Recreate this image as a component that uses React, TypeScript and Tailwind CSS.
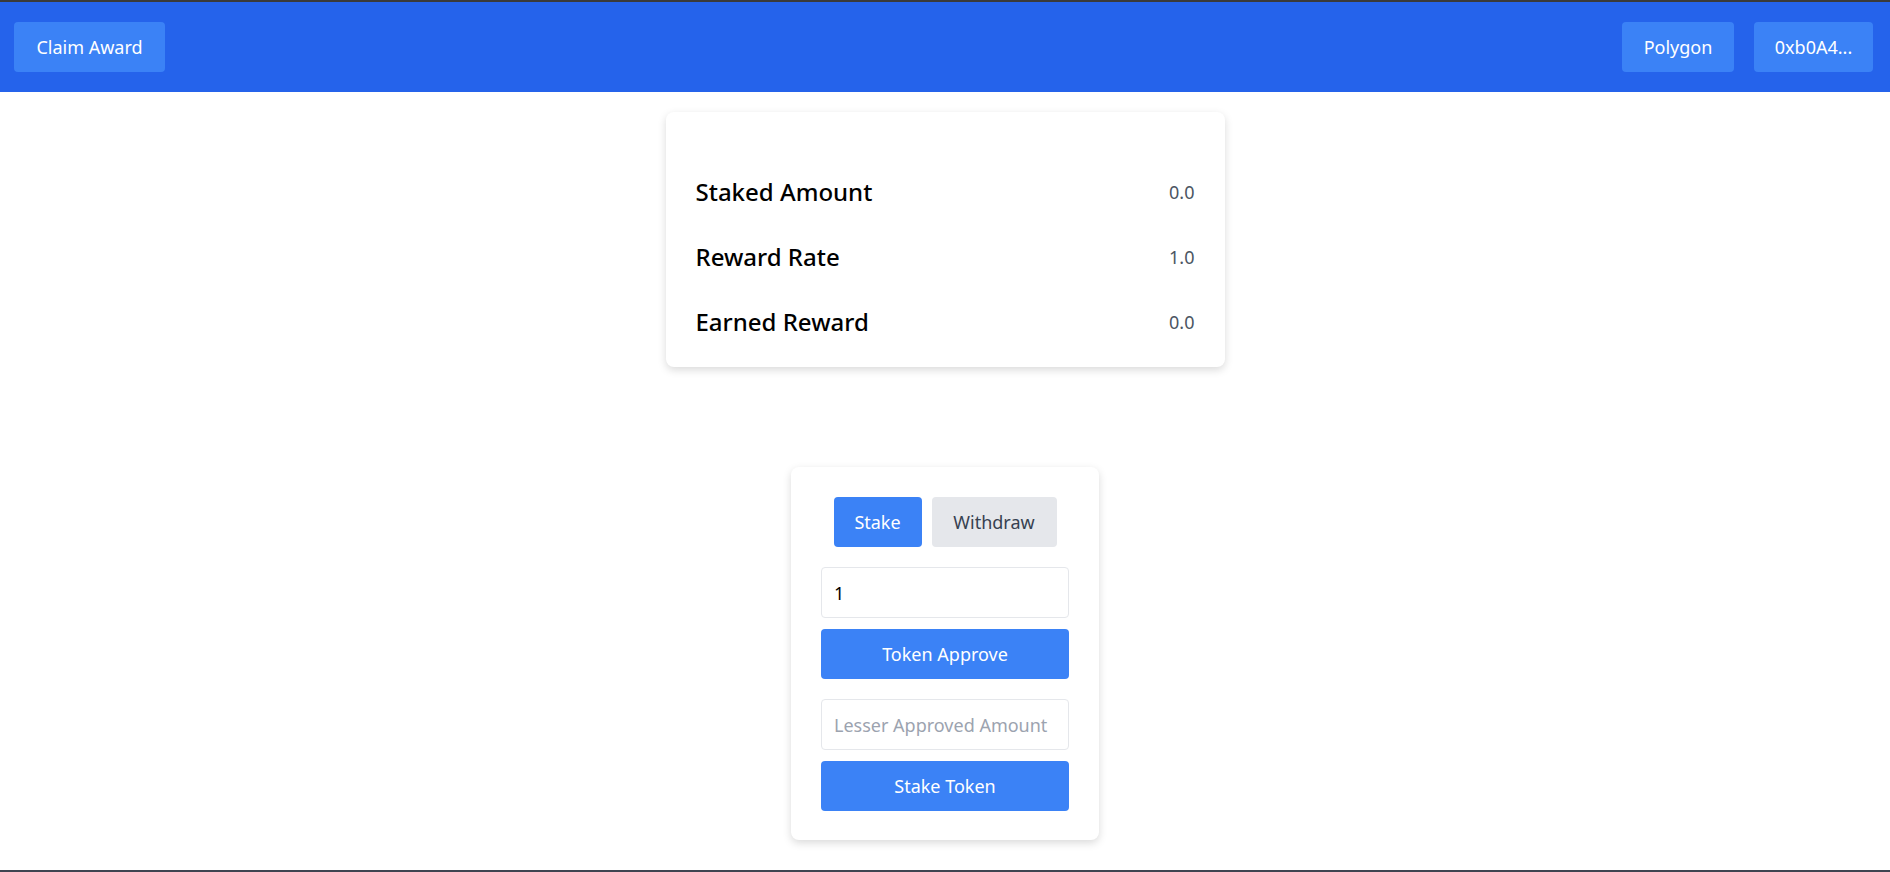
import { useState } from "react";

const rows = [
  { label: "Staked Amount", value: "0.0" },
  { label: "Reward Rate", value: "1.0" },
  { label: "Earned Reward", value: "0.0" },
];

export default function App() {
  const [tab, setTab] = useState<"stake" | "withdraw">("stake");
  const [amount, setAmount] = useState("1");
  const [lesser, setLesser] = useState("");

  return (
    <div
      className="flex min-h-[872px] flex-col border-t-2 border-b-2 border-t-[#3a3a3a] border-b-[#3f4451] bg-white"
      style={{ fontFamily: '"Segoe UI", "Noto Sans", sans-serif' }}
    >
      <header className="flex h-[90px] items-center justify-between bg-[#2563eb] pl-[14px] pr-[17px]">
        <button className="h-[50px] w-[151px] rounded text-lg text-white bg-[#3b82f6]">Claim Award</button>
        <div className="flex gap-5">
          <button className="h-[50px] w-[112px] rounded text-lg text-white bg-[#3b82f6]">Polygon</button>
          <button className="h-[50px] w-[119px] rounded text-lg text-white bg-[#3b82f6]">0xb0A4...</button>
        </div>
      </header>

      <main className="flex flex-col">
        <section className="mt-[20px] mx-auto w-[559px] rounded-lg bg-white px-[30px] pt-[47px] pb-[13px] shadow-[0_3px_8px_rgba(0,0,0,0.15)]">
          {rows.map((r) => (
            <div key={r.label} className="flex h-[65px] items-center justify-between">
              <span className="text-2xl font-medium text-black">{r.label}</span>
              <span className="text-lg text-[#4b5563]">{r.value}</span>
            </div>
          ))}
        </section>

        <section className="mt-[100px] mx-auto w-[308px] rounded-lg bg-white px-[30px] pt-[30px] pb-[29px] shadow-[0_3px_8px_rgba(0,0,0,0.15)]">
          <div className="flex justify-center gap-[10px]">
            <button
              onClick={() => setTab("stake")}
              className={`h-[50px] w-[88px] rounded text-lg ${tab === "stake" ? "bg-[#3b82f6] text-white" : "bg-[#e5e7eb] text-[#374151]"}`}
            >
              Stake
            </button>
            <button
              onClick={() => setTab("withdraw")}
              className={`h-[50px] w-[125px] rounded text-lg ${tab === "withdraw" ? "bg-[#3b82f6] text-white" : "bg-[#e5e7eb] text-[#374151]"}`}
            >
              Withdraw
            </button>
          </div>

          <input
            value={amount}
            onChange={(e) => setAmount(e.target.value)}
            className="mt-5 h-[51px] w-full rounded border border-[#e5e7eb] px-3 text-lg text-black outline-none"
          />
          <button className="mt-[11px] h-[50px] w-full rounded bg-[#3b82f6] text-lg text-white">Token Approve</button>

          <input
            value={lesser}
            onChange={(e) => setLesser(e.target.value)}
            placeholder="Lesser Approved Amount"
            className="mt-5 h-[51px] w-full rounded border border-[#e5e7eb] px-3 text-lg text-black outline-none placeholder:text-[#9ca3af]"
          />
          <button className="mt-[11px] h-[50px] w-full rounded bg-[#3b82f6] text-lg text-white">Stake Token</button>
        </section>
      </main>
    </div>
  );
}
